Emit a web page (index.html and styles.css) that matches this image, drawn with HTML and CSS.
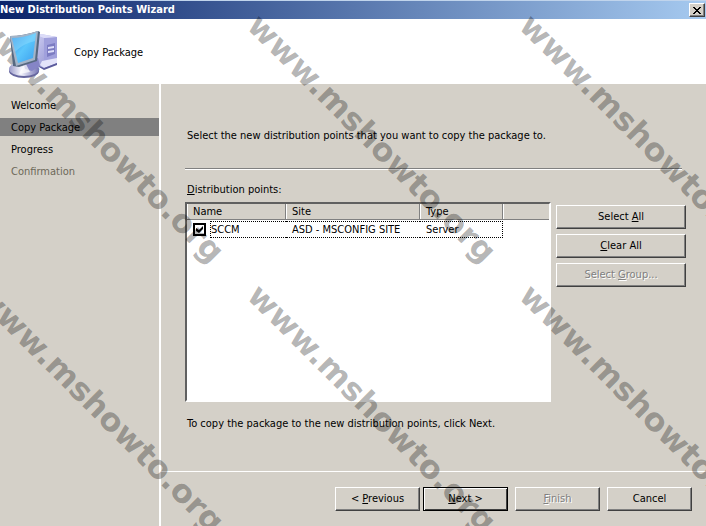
FILE: index.html
```html
<!DOCTYPE html>
<html lang="en">
<head>
<meta charset="utf-8">
<meta name="viewport" content="width=device-width, initial-scale=1">
<title>New Distribution Points Wizard</title>
<link rel="stylesheet" href="styles.css">
</head>
<body>
<div class="wizard">
  <div class="titlebar">
    <h1 class="title">New Distribution Points Wizard</h1>
    <button class="close" type="button" aria-label="Close">
      <svg width="8" height="7" viewBox="0 0 8 7" shape-rendering="crispEdges" aria-hidden="true">
        <path d="M0 0h2v1h1v1h2v-1h1v-1h2v1h-1v1h-1v1h-1v1h1v1h1v1h1v1h-2v-1h-1v-1h-2v1h-1v1h-2v-1h1v-1h1v-1h1v-1h-1v-1h-1v-1h-1z"/>
      </svg>
    </button>
  </div>

  <header class="banner">
    <svg class="computer" width="52" height="52" viewBox="0 0 52 52" aria-hidden="true">
      <defs>
        <linearGradient id="screen" x1="0" y1="0" x2="1" y2="1">
          <stop offset="0" stop-color="#2f8ee6"/>
          <stop offset=".5" stop-color="#5cc6fb"/>
          <stop offset="1" stop-color="#3a9eee"/>
        </linearGradient>
        <linearGradient id="tower" x1="0" y1="0" x2="1" y2="1">
          <stop offset="0" stop-color="#d0d0f4"/>
          <stop offset="1" stop-color="#8686c8"/>
        </linearGradient>
        <linearGradient id="base" x1="0" y1="0" x2="1" y2="0">
          <stop offset="0" stop-color="#9a9ac8"/>
          <stop offset=".4" stop-color="#f4f4fc"/>
          <stop offset="1" stop-color="#7474b4"/>
        </linearGradient>
      </defs>
      <path d="M28 9l6-2 16 3v27l-13 5-9-4z" fill="url(#tower)"/>
      <path d="M37 11l13-1v23l-13 3z" fill="#a0a0dc"/>
      <path d="M29 8l5-1 16 3-13 1z" fill="#dcdcf8"/>
      <path d="M40 18l8-2v11l-8 3z" fill="#7c7cc2"/>
      <path d="M41 20l6-1v2l-6 1zM41 24l6-1v2l-6 1z" fill="#dedefa"/>
      <path d="M35 34l15-3v5l-13 5-4-3z" fill="#e4e4fa"/>
      <path d="M37 41l13-5v2l-13 5-5-3v-1z" fill="#5c5c9c"/>
      <ellipse cx="17" cy="44" rx="15" ry="7" fill="#66669e"/>
      <ellipse cx="17" cy="42" rx="15" ry="7" fill="url(#base)"/>
      <path d="M16 34l15-3 2 8-8 5-7-2z" fill="#8585c6"/>
      <path d="M18 35l-6 12 11-2z" fill="#fff" opacity=".7"/>
      <path d="M3 9Q16 9 31 4l2 1-3 29-18 6-6-1z" fill="#566880"/>
      <path d="M3 9Q16 9 31 4l-3 29-19 6z" fill="#a3b4c8"/>
      <path d="M5 11q12 0 24-5l-3 25-15 5z" fill="url(#screen)"/>
      <path d="M5 11q12 0 24-5l-1 8Q15 17 8 25z" fill="#9be2ff" opacity=".4"/>
    </svg>
    <h2 class="step-title">Copy Package</h2>
  </header>

  <div class="body">
    <nav class="steps" aria-label="Wizard steps">
      <ol>
        <li>Welcome</li>
        <li class="current" aria-current="step">Copy Package</li>
        <li>Progress</li>
        <li class="pending">Confirmation</li>
      </ol>
    </nav>

    <div class="page">
      <main class="content">
        <p class="intro">Select the new distribution points that you want to copy the package to.</p>
        <hr class="rule">
        <p class="list-label" id="points-label"><u>D</u>istribution points:</p>
        <div class="picker">
          <div class="list">
            <table aria-labelledby="points-label">
              <colgroup><col class="col-name"><col class="col-site"><col class="col-type"><col></colgroup>
              <thead>
                <tr><th>Name</th><th>Site</th><th>Type</th><th></th></tr>
              </thead>
              <tbody>
                <tr>
                  <td>
                    <div class="name">
                      <input type="checkbox" id="sccm" checked>
                      <label class="focus focus-start" for="sccm">SCCM</label>
                    </div>
                  </td>
                  <td><div class="focus">ASD - MSCONFIG SITE</div></td>
                  <td><div class="focus focus-end">Server</div></td>
                  <td></td>
                </tr>
              </tbody>
            </table>
          </div>
          <div class="actions">
            <button type="button">Select <u>A</u>ll</button>
            <button type="button"><u>C</u>lear All</button>
            <button type="button" disabled>Select <u>G</u>roup...</button>
          </div>
        </div>
        <p class="hint">To copy the package to the new distribution points, click Next.</p>
      </main>
      <footer class="footer">
        <div class="pair">
          <button type="button">&lt; <u>P</u>revious</button>
          <button type="button" class="default"><u>N</u>ext &gt;</button>
        </div>
        <button type="button" disabled><u>F</u>inish</button>
        <button type="button">Cancel</button>
      </footer>
    </div>
  </div>

  <div class="watermark" aria-hidden="true">
    <span>www.mshowto.org</span><span>www.mshowto.org</span><span>www.mshowto.org</span>
    <span>www.mshowto.org</span><span>www.mshowto.org</span><span>www.mshowto.org</span>
  </div>
</div>
</body>
</html>
```
FILE: styles.css
```css
* {
  box-sizing: border-box;
}

body {
  margin: 0;
  font: 11px/14px "DejaVu Sans Condensed", "DejaVu Sans", sans-serif;
  color: #000;
  background: #d4d0c8;
}

h1, h2, p, ol {
  margin: 0;
  padding: 0;
  font-size: inherit;
  font-weight: normal;
}

.wizard {
  position: relative;
  display: flex;
  flex-direction: column;
  min-height: 100vh;
  overflow: hidden;
}

.titlebar {
  display: flex;
  align-items: center;
  justify-content: space-between;
  height: 19px;
  padding-right: 1px;
  border-top: 1px solid #c0d4ec;
  background: linear-gradient(to right, #0a246a, #a6caf0);
}

.title {
  font-weight: bold;
  color: #fff;
}

button {
  height: 24px;
  padding: 0;
  border: 1px solid;
  border-color: #fff #404040 #404040 #fff;
  background: #d4d0c8;
  box-shadow: inset -1px -1px #808080;
  font: inherit;
  color: inherit;
}

button:disabled {
  color: #808080;
  text-shadow: 1px 1px #fff;
}

.close {
  display: flex;
  align-items: center;
  justify-content: center;
  width: 16px;
  height: 14px;
}

.banner {
  display: flex;
  align-items: center;
  gap: 15px;
  height: 65px;
  padding: 3px 0 0 7px;
  background: #fff;
}

.computer {
  position: relative;
  z-index: 1;
}

.body {
  display: flex;
  flex: 1;
}

.steps {
  flex: 0 0 161px;
  padding-top: 12px;
  border-right: 2px solid #fff;
}

.steps ol {
  display: grid;
  gap: 4px;
  list-style: none;
}

.steps li {
  padding: 3px 11px 1px;
}

.steps .current {
  background: #808080;
}

.steps .pending {
  color: #6c6858;
}

.page {
  display: flex;
  flex: 1;
  flex-direction: column;
}

.content {
  flex: 1;
  padding: 45px 20px 0 24px;
}

.intro,
.list-label,
.hint {
  padding-left: 2px;
}

.rule {
  height: 2px;
  margin: 25px 4px 13px 0;
  border: 0;
  border-top: 1px solid #808080;
  background: #fff;
}

.picker {
  display: flex;
  gap: 5px;
  margin: 5px 0 15px;
}

.list {
  flex: 1;
  height: 200px;
  border: 2px solid;
  border-color: #606060 #fff #fff #606060;
  background: #fff;
}

table {
  width: 100%;
  border-collapse: separate;
  border-spacing: 0;
  table-layout: fixed;
}

.col-name { width: 99px; }
.col-site { width: 134px; }
.col-type { width: 83px; }

th {
  height: 16px;
  padding: 1px 6px 0;
  border-right: 1px solid #808080;
  border-bottom: 1px solid #808080;
  background: #d4d0c8;
  box-shadow: inset 1px 0 #fff;
  font-weight: normal;
  line-height: 14px;
  text-align: left;
}

th:last-child {
  border-right: 0;
}

td {
  padding: 1px 0 0;
}

.name {
  display: flex;
  align-items: center;
  gap: 4px;
  padding-left: 6px;
}

.focus {
  flex: 1;
  height: 17px;
  padding-left: 6px;
  border: 0 dotted #000;
  border-width: 1px 0;
  line-height: 15px;
}

.focus-start {
  padding-left: 0;
  border-left-width: 1px;
}

.focus-end {
  border-right-width: 1px;
}

input[type="checkbox"] {
  appearance: none;
  width: 13px;
  height: 13px;
  margin: 0;
  border: 2px solid #000;
  background: #fff;
  display: grid;
  place-items: center;
}

input[type="checkbox"]:checked::before {
  content: "";
  width: 7px;
  height: 7px;
  background: #000;
  clip-path: polygon(0 29%, 43% 58%, 100% 0, 100% 43%, 43% 100%, 0 71%);
}

.actions {
  display: flex;
  flex: 0 0 130px;
  flex-direction: column;
  gap: 5px;
  padding-top: 3px;
}

.footer {
  display: flex;
  justify-content: flex-end;
  gap: 7px;
  padding: 15px 14px;
  border-top: 1px solid #fff;
}

.footer button {
  width: 85px;
}

.pair {
  display: flex;
  gap: 3px;
}

.default {
  border-color: #000;
  box-shadow: inset 1px 1px #fff, inset -1px -1px #404040;
}

.watermark {
  position: absolute;
  top: -1px;
  left: -30px;
  display: grid;
  grid-template-columns: repeat(3, 272px);
  grid-auto-rows: 270px;
  pointer-events: none;
}

.watermark span {
  font: bold 32px/32px "DejaVu Sans", sans-serif;
  white-space: nowrap;
  color: rgba(0, 0, 0, 0.3);
  height: 32px;
  transform: rotate(45deg);
  transform-origin: 0 100%;
}
```
